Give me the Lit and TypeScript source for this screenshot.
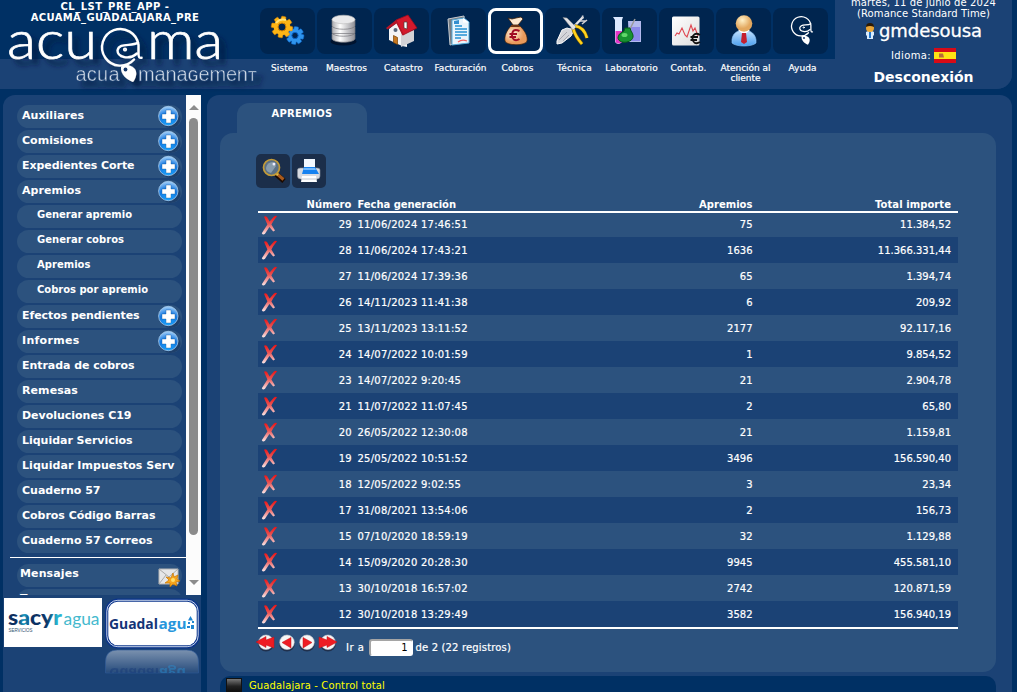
import { LitElement, html, css, svg, nothing } from "lit";
import { customElement, property } from "lit/decorators.js";

/** Single line of text whose tracking is adjusted so that it fills a given width. */
@customElement("fit-text")
class FitText extends LitElement {
  @property({ type: Number }) width = 0;
  @property() text = "";
  static styles = css`
    :host { display: inline-block; white-space: nowrap; }
    .t { display: inline-block; }
  `;
  render() { return html`<span class="t">${this.text}</span>`; }
  updated() {
    const el = this.renderRoot.querySelector(".t") as HTMLElement;
    el.style.letterSpacing = "0px";
    const natural = el.getBoundingClientRect().width;
    if (this.width > 0) el.style.letterSpacing = `${(this.width - natural) / this.text.length}px`;
  }
}

const fit = (text: string, width: number) => html`<fit-text .text=${text} .width=${width}></fit-text>`;

const gear = (cx: number, cy: number, r: number, fill: string, edge: string, hole: string) => svg`
  <g transform="translate(${cx} ${cy})">
    ${[0, 45, 90, 135, 180, 225, 270, 315].map(a => svg`<rect x="-2.3" y=${-r - 2.4} width="4.6" height="5" rx="1" fill=${fill} stroke=${edge} stroke-width=".5" transform="rotate(${a + 10})"/>`)}
    <circle r=${r} fill=${fill}/><circle r=${r * 0.48} fill=${hole} stroke=${edge} stroke-width="1"/>
  </g>`;

const mark = svg`
  <g fill="none" stroke="#fff" stroke-linecap="round">
    <path stroke-width="2.4" d="M33 33.500A18.300 18.300 0 1 1 37.500 19V28Q37.500 32.500 40.500 31.800"/>
    <path stroke-width="2.4" d="M37 16.500C31 21 18 16 16.500 24.500C16.500 31 28 34.500 36 27.500"/>
    <circle cx="24" cy="23.500" r="1.200" stroke-width="1.800"/>
  </g>
  <path fill="#fff" d="M20 41C22 37 28 38 33 42C37 46 35 52 32 56C26 54 19 48 20 41Z"/>
  <circle cx="24.500" cy="43.500" r="1.900" fill="#17396a"/>`;

const icons: Record<string, unknown> = {
  sistema: svg`${gear(27, 23.5, 6.5, "#2f95ee", "#0b62c4", "#00254f")}${gear(14, 15, 8.3, "#fdb515", "#d98400", "#00254f")}
    <path d="M8 11q4-5 10-3" stroke="#ffe27a" stroke-width="2" fill="none"/>`,
  maestros: svg`<defs><linearGradient id="m"><stop stop-color="#a9a9ad"/><stop offset=".35" stop-color="#fff"/><stop offset="1" stop-color="#8f8f96"/></linearGradient></defs>
    <g transform="translate(-1.500 -1.500)"><ellipse cx="20" cy="31" rx="13" ry="4" fill="#00132e"/>
    <path d="M8.500 23v5c0 5 23 5 23 0v-5zM8.500 16v6c0 5 23 5 23 0v-6z" fill="url(#m)" stroke="#77777d" stroke-width=".7"/>
    <path d="M8.500 9v6c0 5 23 5 23 0V9z" fill="url(#m)" stroke="#77777d" stroke-width=".7"/><ellipse cx="20" cy="9" rx="11.500" ry="4.300" fill="#e9e9eb" stroke="#bbb" stroke-width=".6"/></g>`,
  catastro: svg`<g transform="translate(-1 0)"><path d="M8 17l10-8 8 12v14l-5-1-13-6z" fill="#f4f4f4"/><path d="M20 21l13-3v11l-13 6z" fill="#d2d2d6"/>
    <path d="M15 8l12-5 9 13-14 7z" fill="#d3192c" stroke="#9c0b1d" stroke-width=".8"/><path d="M15 8L5 16l1.500 1.500 9-6 6 12 1.500-1z" fill="#b71526"/>
    <path d="M23 10h3v7l-3-1z" fill="#fff" stroke="#444" stroke-width=".7"/><path d="M12.500 23.500l4 2v7l-4-2z" fill="#c7771e" stroke="#784000" stroke-width=".7"/><circle cx="14.500" cy="18" r="2" fill="#56657a"/></g>`,
  facturacion: svg`<path d="M9 7l16-3 2 25-16 4z" fill="#777b80" stroke="#c6cbd0"/><path d="M13 8l12-2 5 4v21l-17 2z" fill="#e9f5fc" stroke="#54a9d8"/>
    <path d="M24 6l6 4.500h-6z" fill="#fff"/><path d="M16 14h7M16 17h12M16 20h12M16 23h12M16 26h6" stroke="#55aadd" stroke-width="1.800"/><path d="M19 30q4-3 9-1" stroke="#f16363" stroke-width="1.300" fill="none"/><path d="M15 9l5-1v4h-5z" fill="#348fcf"/>`,
  cobros: svg`<defs><radialGradient id="b" cx=".35" cy=".4"><stop stop-color="#fff0dc"/><stop offset="1" stop-color="#e99a5b"/></radialGradient></defs>
    <path d="M12 6l4 1 4-1 5-1 2 2-5 6h-5z" fill="#fde8cf" stroke="#3a1c08" stroke-width=".8"/>
    <path d="M15 14h9c5 5 8 10 7 15-1 5-21 5-22 0-1-5 2-11 6-15z" fill="url(#b)" stroke="#3a1c08" stroke-width=".7"/><path d="M15 13h8l1 2h-9z" fill="#6c3516"/>
    <path d="M23.500 19c-6-3-7.500 1-7.500 4.500s3 6.500 7.500 3.500M13.500 22h7.500M13.500 25h6.500" stroke="#a20e25" stroke-width="2" fill="none"/>`,
  tecnica: svg`<path d="M30 5L14 22" stroke="#e6e6ea" stroke-width="2.400"/><path d="M29.500 3.500l.5 3M27 9l6 0M29 12l5-4" stroke="#d0d0d4" stroke-width="1.600" fill="none"/>
    <path d="M4 29l5-11 5-2 7 2-3 6-9 7-5 1z" fill="#d4d5da" stroke="#fafafa"/><path d="M6 28l8-8M10 29l6-6" stroke="#9a9aa4" stroke-width=".8"/>
    <path d="M20 16q2 8 9 16M22 14q9 1 12 12" stroke="#7a5b00" stroke-width="3.600" fill="none"/><path d="M20 16q2 8 9 16M22 14q9 1 12 12" stroke="#ffd21d" stroke-width="2.600" fill="none"/><path d="M10 5.500l4 .5 9 9-3 3z" fill="#e1e2e6" stroke="#888" stroke-width=".5"/>`,
  laboratorio: svg`<path d="M3 5h10l-1 3v22q-4 4-7 0V8z" fill="#dce9ff"/><path d="M5.500 19H12v11q-4 3-6.500 0z" fill="#e536c8"/><path d="M18 9h13v21H19z" fill="#c6cbff" opacity=".9"/><path d="M19 15h11v14H20z" fill="#8b89ea"/>
    <path d="M20 17l5-10" stroke="#9a9a9a" stroke-width="1.600"/><path d="M15 16h5l1 3c9 12-14 15-13 6q0-3 6-6z" fill="#189231" stroke="#075a18"/><ellipse cx="14.500" cy="23" rx="3" ry="2" fill="#60d66a"/>`,
  contab: svg`<defs><linearGradient id="g" x2="1" y2="1"><stop stop-color="#fff"/><stop offset="1" stop-color="#ddd"/></linearGradient></defs>
    <rect x="5" y="4.500" width="27.500" height="29" rx="1.500" fill="url(#g)"/><path d="M8 24l2-3 2 1 3-6 3 7 2 2 4-12 2 6 2-3 3 8" fill="none" stroke="#df4650" stroke-width="1.100"/>
    <path d="M33 23c-4.500-3-7.500 0-7.500 3.500s3 6.500 7.500 3.500M23.500 25h7.500M23.500 28h6.500" stroke="#111" stroke-width="1.800" fill="none"/>`,
  atencion: svg`<defs><linearGradient id="p" y2="1" x2="0"><stop stop-color="#c8e4ff"/><stop offset="1" stop-color="#4b9fef"/></linearGradient><radialGradient id="h" cx=".4" cy=".3"><stop stop-color="#fff1c8"/><stop offset="1" stop-color="#e3a85f"/></radialGradient></defs>
    <path d="M8 31c-1-10 6-13 12-13s13 4 12 13c-4 4-20 4-24 0z" fill="url(#p)" stroke="#8cc4f8" stroke-width=".6"/><path d="M14 18l6 5 6-5" fill="#fff"/><path d="M18 21h4l1 9-3 2-3-2z" fill="#c51f2e"/><circle cx="20" cy="11.500" r="8.300" fill="url(#h)"/>`,
  ayuda: svg`<g transform="translate(10 3) scale(.53)">${mark}</g>`,
};

const plus = html`<svg class="plus" viewBox="0 0 24 23"><defs><radialGradient id="q" cx=".5" cy=".9" r=".9"><stop stop-color="#19a4ff"/><stop offset=".6" stop-color="#1578e0"/><stop offset="1" stop-color="#a9d3fa"/></radialGradient></defs>
  <ellipse cx="13.500" cy="14" rx="10" ry="9" fill="#14305a" opacity=".55"/><circle cx="11.300" cy="11" r="9.700" fill="url(#q)" stroke="#a6ccec" stroke-width=".8"/><path d="M9 5h5v4h4v5h-4v4H9v-4H5V9h4z" fill="#fff" stroke="#1b5c9f" stroke-width=".4"/></svg>`;
const mail = html`<svg class="plus" viewBox="0 0 24 23"><path d="M2 5h19v15H2z" fill="#e5e6e8" stroke="#b6b6b6"/><path d="M2 5l10 8 9-8M2 20l7-9" fill="none" stroke="#aaa"/><path d="M16 9l1 4 4-2-1 4 3 2-4 1 1 4-4-2-3 3v-4l-5 0 4-3-3-3 5 1z" fill="#f6a51d" stroke="#c97600" stroke-width=".7"/><circle cx="16" cy="16" r="2" fill="#ffdf6b"/></svg>`;

const nav: [string, [string, number][]][] = [
  ["sistema", [["Sistema", 37]]], ["maestros", [["Maestros", 41]]], ["catastro", [["Catastro", 39]]],
  ["facturacion", [["Facturación", 52]]], ["cobros", [["Cobros", 32]]], ["tecnica", [["Técnica", 35]]],
  ["laboratorio", [["Laboratorio", 52.5]]], ["contab", [["Contab.", 36]]],
  ["atencion", [["Atención al", 50], ["cliente", 30]]], ["ayuda", [["Ayuda", 28]]],
];

interface Item { t: string; w: number; sub?: boolean; plus?: boolean }
const menu: Item[] = [
  { t: "Auxiliares", w: 62, plus: true }, { t: "Comisiones", w: 71, plus: true },
  { t: "Expedientes Corte", w: 112.5, plus: true }, { t: "Apremios", w: 59, plus: true },
  { t: "Generar apremio", w: 95, sub: true }, { t: "Generar cobros", w: 87, sub: true },
  { t: "Apremios", w: 53.5, sub: true }, { t: "Cobros por apremio", w: 111, sub: true },
  { t: "Efectos pendientes", w: 117.5, plus: true }, { t: "Informes", w: 57.5, plus: true },
  { t: "Entrada de cobros", w: 112.5 }, { t: "Remesas", w: 56 }, { t: "Devoluciones C19", w: 109.5 },
  { t: "Liquidar Servicios", w: 110.5 }, { t: "Liquidar Impuestos Serv", w: 152.5 },
  { t: "Cuaderno 57", w: 78.5 }, { t: "Cobros Código Barras", w: 133.5 }, { t: "Cuaderno 57 Correos", w: 130.5 },
];

const rows: [string, string, string, string][] = [
  ["29", "11/06/2024 17:46:51", "75", "11.384,52"],
  ["28", "11/06/2024 17:43:21", "1636", "11.366.331,44"],
  ["27", "11/06/2024 17:39:36", "65", "1.394,74"],
  ["26", "14/11/2023 11:41:38", "6", "209,92"],
  ["25", "13/11/2023 13:11:52", "2177", "92.117,16"],
  ["24", "14/07/2022 10:01:59", "1", "9.854,52"],
  ["23", "14/07/2022 9:20:45", "21", "2.904,78"],
  ["21", "11/07/2022 11:07:45", "2", "65,80"],
  ["20", "26/05/2022 12:30:08", "21", "1.159,81"],
  ["19", "25/05/2022 10:51:52", "3496", "156.590,40"],
  ["18", "12/05/2022 9:02:55", "3", "23,34"],
  ["17", "31/08/2021 13:54:06", "2", "156,73"],
  ["15", "07/10/2020 18:59:19", "32", "1.129,88"],
  ["14", "15/09/2020 20:28:30", "9945", "455.581,10"],
  ["13", "30/10/2018 16:57:02", "2742", "120.871,59"],
  ["12", "30/10/2018 13:29:49", "3582", "156.940,19"],
];

const cross = html`<svg class="cross" viewBox="0 0 18 20"><defs><linearGradient id="x" x2="0" y2="1"><stop stop-color="#f01010"/><stop offset=".4" stop-color="#e85050"/><stop offset="1" stop-color="#fbe8e8"/></linearGradient></defs>
  <path d="M3 1.800Q4.500.4 6 2L8.600 6.500 13 1.400Q15 0 16 1.200 12 6 10.400 9.500L14 15.500 12.200 16.600 8.400 12 4 18.800Q2 20.500 .8 18.300L6.400 9.600Z" fill="url(#x)"/></svg>`;

const ball = (paths: string) => html`<svg class="ball" viewBox="0 0 20 18"><circle cx="10" cy="9.700" r="7.800" fill="#20304c"/><circle cx="10" cy="8.300" r="7.300" fill="#f7f7f7" stroke="#c5c8ce" stroke-width=".6"/><path d=${paths} fill="#ee1c23" stroke="#c21117" stroke-width=".5"/></svg>`;

@customElement("app-root")
class AppRoot extends LitElement {
  static styles = css`
    :host { display: block; width: 1017px; height: 692px; overflow: hidden; background: #003064; color: #fff;
      font: 10px/12px "DejaVu Sans", Verdana, sans-serif; }
    * { box-sizing: border-box; }
    .header { display: flex; height: 89px; width: 1012px; border-bottom-right-radius: 15px;
      background: linear-gradient(#003064 59px, #1b4275 59px); }
    .brand { width: 260px; flex: none; }
    .env { width: 230px; padding-top: 1px; text-align: center; font-weight: bold; line-height: 11px; height: 23px; }
    .env fit-text { display: block; }
    .logo { display: block; width: 260px; height: 66px; overflow: visible; }
    .nav { display: flex; gap: 2px; width: 575px; padding-top: 8px; }
    .navitem { width: 55px; text-align: center; font-size: 9px; line-height: 10px; display: flex; flex-direction: column; align-items: center; }
    .navitem fit-text { margin-left: 4px; -webkit-text-stroke: .2px #fff; }
    .tile { width: 55px; height: 46px; border-radius: 8px; background: #00254f; display: flex; align-items: center; justify-content: center; margin-bottom: 9px; flex: none; }
    .active { border: 3px solid #fff; }
    .ico { width: 40px; height: 38px; flex: none; }
    .user { width: 177px; flex: none; background: #1b4275; border-bottom-right-radius: 15px; text-align: center; display: flex; flex-direction: column; align-items: center; height: 89px; overflow: hidden; }
    .date { line-height: 11px; margin-top: -3px; height: 22px; }
    .date fit-text { display: block; }
    .name { display: flex; align-items: center; gap: 4px; font-size: 18px; line-height: 22px; margin-top: 1px; height: 22px; -webkit-text-stroke: .3px #fff; }
    .lang { display: flex; align-items: center; gap: 3px; height: 15px; margin-top: 6px; }
    .exit { font-size: 14px; font-weight: bold; line-height: 18px; margin-top: 5px; }
    .body { display: flex; padding: 6px 0 0 3px; gap: 6px; }
    .side { width: 198px; height: 597px; background: #1b4275; border-top-left-radius: 12px; }
    .scroller { display: flex; height: 500px; overflow: hidden; }
    .list { width: 183px; padding-top: 10px; height: 500px; overflow: hidden; }
    .item { display: flex; justify-content: space-between; height: 23px; width: 165px; margin: 0 0 2px 14px; padding-left: 5px;
      background: #2c527e; border-radius: 12px; font-size: 11px; line-height: 21px; font-weight: bold; }
    .sub { padding-left: 20px; font-size: 10px; line-height: 19px; }
    .msg { padding-left: 3px; line-height: 19px; }
    .plus { width: 24px; height: 23px; margin-right: 1px; }
    .rule { height: 1px; margin: 4px 0 6px 7px; background: #fff; }
    .bar { width: 15px; background: #fcfcfc; display: flex; flex-direction: column; align-items: center; padding: 10px 0; }
    .up, .down { border: 5px solid transparent; border-top: 0; border-bottom-color: #8b8b8b; width: 0; }
    .down { border-top: 5px solid #8b8b8b; border-bottom: 0; margin-top: 45px; }
    .thumb { width: 9px; height: 417px; margin-top: 8px; border-radius: 5px; background: #8b8b8b; flex: none; }
    .logos { display: block; width: 198px; height: 80px; margin-top: 3px; }
    .main { width: 805px; height: 597px; padding: 8px 16px 0 13px; background: #1b4275; border-radius: 12px 12px 0 0; }
    .tab { width: 130px; height: 30px; margin-left: 17px; background: #2c527e; border-radius: 12px 12px 0 0; text-align: center; font-weight: bold; line-height: 21px; }
    .panel { height: 539px; background: #2c527e; border-radius: 13px; padding: 21px 38px 0 36px; }
    .tools { display: flex; gap: 2px; height: 34px; }
    .tool { width: 34px; height: 34px; border-radius: 5px; background: #1b2e4a; }
    .table { margin: 9px 0 0 2px; width: 700px; border-bottom: 2px solid #fff; }
    .row { display: grid; grid-template-columns: 24px 69.500px 112px 289px 198.500px; height: 26px; line-height: 27px; align-items: start; -webkit-text-stroke: .2px #fff; }
    .row:nth-child(odd) { background: #1b4275; }
    .head.row { background: none; height: 16px; line-height: 15px; font-weight: bold; border-bottom: 2px solid #fff; -webkit-text-stroke: 0; }
    .first.row { height: 24px; line-height: 23px; }
    .r { text-align: right; }
    .d { padding-left: 6px; letter-spacing: .24px; white-space: nowrap; }
    .cross { width: 18px; height: 20px; margin: 3px 0 0 3px; display: block; }
    .first .cross { margin-top: 2px; }
    .pager { display: flex; align-items: flex-start; height: 24px; margin-top: 5px; }
    .ball { width: 20px; height: 18px; }
    .go { line-height: 27px; -webkit-text-stroke: .2px #fff; }
    .ir { margin-left: 8px; }
    .num { margin: 5px 3px 0 4px; width: 44px; height: 17px; background: #fff; color: #000; border: 1px solid #a5a5a5; border-top-width: 2px; border-left-width: 2px; border-right-color: #fff; border-bottom-color: #fff; border-radius: 3px; text-align: right; padding-right: 4px; line-height: 14px; }
    .foot { display: flex; gap: 7px; height: 17px; margin-top: 4px; padding-left: 6px; background: #003064; border-radius: 10px 10px 0 0; color: #ff0; line-height: 20px; }
    .sq { width: 16px; height: 14px; margin-top: 2px; border: 1px solid #111; background: linear-gradient(#777, #222 60%, #111); }
    .s { width: 1px; }
  `;

  render() {
    return html`
      <div class="header">
        <div class="brand">
          <div class="env">${fit("CL_LST_PRE_APP -", 109)}${fit("ACUAMA_GUADALAJARA_PRE", 168.5)}</div>
          <svg class="logo" viewBox="0 23 260 66">
            <defs><filter id="sh" x="-10%" y="-20%" width="130%" height="160%"><feDropShadow dx="6" dy="6" stdDeviation="2.5" flood-color="#001a40" flood-opacity=".8"/></filter></defs>
            <g filter="url(#sh)" fill="#fff">
              <g font-family="Lato, 'Open Sans', sans-serif" font-weight="300" font-size="54" stroke="#fff" stroke-width=".7">
                <text x="7" y="58.500" textLength="90" lengthAdjust="spacingAndGlyphs">acu</text>
                <text x="147" y="58.500" textLength="76" lengthAdjust="spacingAndGlyphs">ma</text>
              </g>
              <g transform="translate(101 26)">${mark}</g>
              <g font-family="'Liberation Sans', sans-serif" font-size="20" fill="#d3dce8">
                <text x="75.500" y="80.500" textLength="44" lengthAdjust="spacing" stroke="#1b4275" stroke-width=".5">acua</text>
                <text x="138" y="80.500" textLength="119" lengthAdjust="spacing" stroke="#1b4275" stroke-width=".5">manaɢemen<tspan font-size="15">T</tspan></text>
              </g>
            </g>
          </svg>
        </div>
        <div class="nav">
          ${nav.map(([k, l]) => html`<div class="navitem">
            <div class="tile ${k === "cobros" ? "active" : ""}"><svg class="ico" viewBox="0 0 40 38">${icons[k]}</svg></div>
            ${l.map(([t, w]) => fit(t, w))}</div>`)}
        </div>
        <div class="user">
          <div class="date">${fit("martes, 11 de junio de 2024", 145)}${fit("(Romance Standard Time)", 133)}</div>
          <div class="name"><svg width="10" height="16" viewBox="0 0 10 16"><path d="M1 9q4-3 8 0v3l-1 1v3H2v-3l-1-1z" fill="#d8ecff"/><path d="M5 9v6" stroke="#2779ce" stroke-width="2"/><circle cx="5" cy="5" r="4" fill="#e9a638"/><path d="M1 4Q1 0 5 0t4 4Q5 2 1 4" fill="#2c1a05"/></svg>${fit("gmdesousa", 103)}</div>
          <div class="lang">${fit("Idioma:", 40)}<svg width="22" height="15" viewBox="0 0 22 15"><path d="M0 0h22v15H0z" fill="#d80b17"/><path d="M0 4h22v7H0z" fill="#ffe314"/><path d="M5 5.500h4l1 4H5z" fill="#b86b3a"/></svg></div>
          <div class="exit">${fit("Desconexión", 100)}</div>
        </div>
      </div>
      <div class="body">
        <div class="side">
          <div class="scroller">
            <div class="list">
              ${menu.map(m => html`<div class="item ${m.sub ? "sub" : ""}">${fit(m.t, m.w)}${m.plus ? plus : nothing}</div>`)}
              <div class="rule"></div>
              <div class="item msg">${fit("Mensajes", 59)}${mail}</div>
              <div class="item msg">Tareas</div>
            </div>
            <div class="bar"><div class="up"></div><div class="thumb"></div><div class="down"></div></div>
          </div>
          <svg class="logos" viewBox="3 598 198 80">
            <defs><linearGradient id="fade" x2="0" y2="1"><stop stop-color="#fff" stop-opacity=".42"/><stop offset="1" stop-color="#fff" stop-opacity=".05"/></linearGradient>
              <linearGradient id="gd"><stop offset=".15" stop-color="#0c2f60"/><stop offset=".3" stop-color="#1f9fc4"/><stop offset=".42" stop-color="#0c2f60"/><stop offset=".72" stop-color="#0c3a6c"/><stop offset=".9" stop-color="#28b4d0"/></linearGradient></defs>
            <rect x="4" y="598" width="98" height="49" fill="#fff"/>
            <text x="8" y="625" font-family="Lato" font-weight="900" font-size="20" fill="url(#gd)" textLength="54" lengthAdjust="spacingAndGlyphs">sacyr</text>
            <text x="63.500" y="625" font-family="Lato" font-weight="400" font-size="18" fill="#45b9ce" textLength="36" lengthAdjust="spacingAndGlyphs">agua</text>
            <text x="8.500" y="632" font-family="Liberation Sans" font-size="5" fill="#31506f" textLength="24" lengthAdjust="spacingAndGlyphs">SERVICIOS</text>
            <rect x="105" y="598.500" width="95" height="50" rx="13" fill="#0b348b"/>
            <rect x="106.800" y="600.300" width="91.400" height="46.400" rx="11" fill="#0b348b" stroke="#dfe8f6" stroke-width=".9"/>
            <rect x="108.300" y="601.800" width="88.400" height="43.400" rx="9.500" fill="#fff"/>
            <text x="109" y="629" font-family="Open Sans" font-weight="bold" font-size="15" fill="#133577" textLength="49" lengthAdjust="spacingAndGlyphs">Guadal</text>
            <text x="158.500" y="629" font-family="Open Sans" font-weight="bold" font-size="15" fill="#2796dc" textLength="28" lengthAdjust="spacingAndGlyphs">agu</text>
            <path d="M190.500 616l2.500 4.500h-5zM188 622h2v2h-2zM192 621h2v2h-2zM187 626h3v2h-3zM191 625h3v4h-3z" fill="#2086d1"/>
            <path d="M105.500 673v-11q0-12 12-12h69q12 0 12 12v11z" fill="url(#fade)" stroke="#315c9a" stroke-opacity=".6"/>
            <svg x="105" y="650" width="94" height="23" viewBox="0 0 94 23"><g transform="translate(0 46) scale(1 -1)" opacity=".4" font-family="Open Sans" font-weight="bold" font-size="15">
              <text x="4" y="28" fill="#133577" textLength="50" lengthAdjust="spacingAndGlyphs">Guadal</text><text x="54" y="28" fill="#2796dc" textLength="27" lengthAdjust="spacingAndGlyphs">agu</text></g></svg>
          </svg>
        </div>
        <div class="main">
          <div class="tab">${fit("APREMIOS", 61)}</div>
          <div class="panel">
            <div class="tools">
              <div class="tool"><svg viewBox="0 0 34 34"><path d="M20 20l8 7" stroke="#1b0b02" stroke-width="5"/><path d="M20 19l7.500 6.500" stroke="#a95a1c" stroke-width="3"/><path d="M18 17l4 4" stroke="#e2c24b" stroke-width="2.500"/><circle cx="15.500" cy="13.500" r="8" fill="#5b7085" stroke="#c39b38" stroke-width="1.700"/><path d="M10 14q1-6 7-6l3 4-5 7q-5-1-5-5" fill="#93a7b6" opacity=".8"/><circle cx="18" cy="10" r="1.500" fill="#eef"/></svg></div>
              <div class="tool"><svg viewBox="0 0 34 34"><path d="M5.500 16q0-2 3-2h16.500q3 0 3 2v6q0 3-3 3H8.500q-3 0-3-3z" fill="#d6dae1" stroke="#888f9b" stroke-width=".6"/><path d="M12 5h11v10H12z" fill="#f2f8ff"/><path d="M12 13h11l4 7H10z" fill="#1682f0"/><path d="M12 14h11l1 2H11z" fill="#71b9ff"/><path d="M10 22h14l1 6H9z" fill="#fff"/><path d="M10 25h15" stroke="#c3c8cf"/></svg></div>
            </div>
            <div class="table">
              <div class="row head"><span></span><span class="r">${fit("Número", 45)}</span><span class="d">${fit("Fecha generación", 98.5)}</span><span class="r">${fit("Apremios", 53.5)}</span><span class="r">${fit("Total importe", 76)}</span></div>
              ${rows.map((r, i) => html`<div class="row ${i === 0 ? "first" : ""}">${cross}<span class="r">${r[0]}</span><span class="d">${r[1]}</span><span class="r">${r[2]}</span><span class="r">${r[3]}</span></div>`)}
            </div>
            <div class="pager">
              ${ball("M0 8L10 2.500V6L18 3V14L10 11V13.500Z")}<span class="s"></span>${ball("M5 8.500L14 3.500V14Z")}${ball("M6 3.500V14L15 8.500Z")}<span class="s"></span>${ball("M1 3V14L9 11V13.500L19 8 9 2.500V6Z")}
              <span class="go ir">${fit("Ir a", 18.5)}</span>
              <div class="num">1</div><span class="go">${fit("de 2 (22 registros)", 95.5)}</span>
            </div>
          </div>
          <div class="foot"><div class="sq"></div>${fit("Guadalajara - Control total", 136)}</div>
        </div>
      </div>`;
  }
}
